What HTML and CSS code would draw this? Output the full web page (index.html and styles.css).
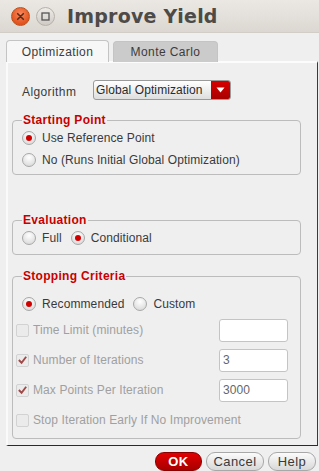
FILE: index.html
```html
<!DOCTYPE html>
<html>
<head>
<meta charset="utf-8">
<link rel="stylesheet" href="styles.css">
</head>
<body>
<div class="titlebar">
  <span class="wbtn close"><svg width="17" height="17" viewBox="0 0 17 17"><path d="M5.7 5.7 L11.3 11.3 M11.3 5.7 L5.7 11.3" stroke="#5a2a1a" stroke-width="1.6" stroke-linecap="round"/></svg></span>
  <span class="wbtn max"><svg width="17" height="17" viewBox="0 0 17 17"><rect x="5" y="5" width="7" height="7" fill="none" stroke="#555" stroke-width="1.3"/></svg></span>
  <span class="title">Improve Yield</span>
</div>
<div class="tabs">
  <div class="tab active">Optimization</div>
  <div class="tab">Monte Carlo</div>
</div>
<div class="panel">
  <div class="algo">
    <span class="algo-label">Algorithm</span>
    <div class="combo"><span class="combo-text">Global Optimization</span><span class="combo-arrow"><svg width="9" height="6" viewBox="0 0 9 6"><path d="M0.5 0.5 L8.5 0.5 L4.5 5.5 Z" fill="#fff"/></svg></span></div>
  </div>
  <fieldset class="group g-start">
    <legend>Starting Point</legend>
    <div class="row"><span class="radio on"></span><span>Use Reference Point</span></div>
    <div class="row"><span class="radio"></span><span>No (Runs Initial Global Optimization)</span></div>
  </fieldset>
  <fieldset class="group g-eval">
    <legend>Evaluation</legend>
    <div class="row"><span class="radio"></span><span class="lbl-gap">Full</span><span class="radio on"></span><span>Conditional</span></div>
  </fieldset>
  <fieldset class="group g-stop">
    <legend>Stopping Criteria</legend>
    <div class="row r-rec"><span class="radio on"></span><span class="lbl-gap">Recommended</span><span class="radio"></span><span>Custom</span></div>
    <div class="crow"><span class="check"></span><span class="dis grow">Time Limit (minutes)</span><span class="field"></span></div>
    <div class="crow"><span class="check"><svg width="12" height="12" viewBox="0 0 12 12"><path d="M2 6 L5 9 L10 2.5" fill="none" stroke="#a04848" stroke-width="2"/></svg></span><span class="dis grow">Number of Iterations</span><span class="field">3</span></div>
    <div class="crow"><span class="check"><svg width="12" height="12" viewBox="0 0 12 12"><path d="M2 6 L5 9 L10 2.5" fill="none" stroke="#a04848" stroke-width="2"/></svg></span><span class="dis grow">Max Points Per Iteration</span><span class="field">3000</span></div>
    <div class="crow last"><span class="check"></span><span class="dis grow">Stop Iteration Early If No Improvement</span></div>
  </fieldset>
</div>
<div class="buttons">
  <span class="btn ok">OK</span>
  <span class="btn">Cancel</span>
  <span class="btn help">Help</span>
</div>
</body>
</html>
```

FILE: styles.css
```css
html, body {
  margin: 0;
  padding: 0;
}
body {
  width: 319px;
  height: 471px;
  background: #efefef;
  font-family: "Liberation Sans", Arial, sans-serif;
  font-size: 12px;
  letter-spacing: 0.1px;
  color: #3a3a3a;
  overflow: hidden;
}
.titlebar {
  height: 32px;
  display: flex;
  align-items: center;
  background: linear-gradient(#ebe8e4, #dcd7d1);
  border-bottom: 1px solid #d2cdc7;
}
.wbtn {
  border-radius: 50%;
  display: flex;
  align-items: center;
  justify-content: center;
}
.close {
  margin-left: 11px;
  background: radial-gradient(circle at 50% 35%, #f88a5e, #e2531e 70%);
  border: 1px solid #b8521f;
  width: 17px;
  height: 17px;
}
.max {
  margin-left: 6px;
  background: linear-gradient(#eeebe8, #cfcac4);
  border: 1px solid #b7b1aa;
  width: 17px;
  height: 17px;
}
.title {
  margin-left: 12px;
  font-family: "DejaVu Sans", sans-serif;
  font-weight: bold;
  font-size: 19px;
  letter-spacing: 0.2px;
  color: #4d4a47;
}
.tabs {
  display: flex;
  margin-top: 7px;
  padding-left: 6px;
  gap: 4px;
  height: 21px;
}
.tab {
  height: 20px;
  border: 1px solid #c4c4c4;
  border-bottom: none;
  border-radius: 4px 4px 0 0;
  background: #cbcbcb;
  color: #3c3c3c;
  display: flex;
  align-items: center;
  justify-content: center;
  width: 103px;
  margin-top: 1px;
  letter-spacing: 0.4px;
}
.tab.active {
  background: #f7f7f7;
  width: 101px;
  height: 21px;
  margin-top: 0;
}
.panel {
  margin-left: 6px;
  width: 309px;
  height: 382px;
  border-top: 2px solid #fcfcfc;
  border-left: 2px solid #fafafa;
  border-right: 1px solid #3a3a3a;
  border-bottom: 1px solid #2a2a2a;
  box-sizing: content-box;
  display: flex;
  flex-direction: column;
}
.algo {
  display: flex;
  align-items: center;
  margin-top: 17px;
  height: 20px;
}
.algo-label {
  margin-left: 14px;
  width: 71px;
  margin-top: 4px;
  letter-spacing: 0.4px;
}
.combo {
  width: 136px;
  height: 18px;
  border: 1px solid #9a9a9a;
  border-radius: 3px;
  background: linear-gradient(#ffffff, #dedede);
  display: flex;
  align-items: center;
  overflow: hidden;
}
.combo-text {
  flex: 1;
  padding-left: 2px;
  color: #2a2a2a;
  white-space: nowrap;
}
.combo-arrow {
  width: 19px;
  height: 18px;
  background: linear-gradient(#d80000, #a80000);
  display: flex;
  align-items: center;
  justify-content: center;
}
.group {
  margin: 0 0 0 4px;
  width: 289px;
  box-sizing: border-box;
  border: 1px solid #bcbcbc;
  border-radius: 4px;
  padding: 0 0 0 9px;
}
legend {
  color: #c80000;
  font-weight: bold;
  font-size: 12px;
  letter-spacing: 0.3px;
  padding: 0 1px;
  margin-left: 0;
  line-height: 14px;
}
.g-start {
  margin-top: 13px;
  height: 62px;
}
.g-eval {
  margin-top: 38px;
  height: 42px;
}
.g-stop {
  margin-top: 14px;
  height: 170px;
}
.row {
  display: flex;
  align-items: center;
  height: 22px;
}
.r-rec { margin-top: 10px; margin-bottom: 0; }
.radio {
  width: 12px;
  height: 12px;
  border-radius: 50%;
  border: 1px solid #a8a8a8;
  background: radial-gradient(circle at 50% 30%, #ffffff, #dcdcdc 80%);
  margin-right: 6px;
  position: relative;
  flex: none;
}
.radio.on::after {
  content: "";
  position: absolute;
  left: 3px;
  top: 3px;
  width: 6px;
  height: 6px;
  border-radius: 50%;
  background: #d00000;
}
.lbl-gap { margin-right: 9px; }
.crow {
  display: flex;
  align-items: center;
  height: 30px;
  margin-left: -6px;
  padding-right: 12px;
}
.check {
  width: 11px;
  height: 11px;
  border: 1px solid #d2d2d2;
  background: #ebebeb;
  border-radius: 2px;
  margin-right: 4px;
  display: flex;
  align-items: center;
  justify-content: center;
  flex: none;
}
.dis { color: #a0a0a0; }
.grow { flex: 1; }
.field {
  width: 64px;
  height: 21px;
  border: 1px solid #c4c4c4;
  border-radius: 3px;
  background: #fff;
  color: #666;
  display: flex;
  align-items: center;
  padding-left: 3px;
  flex: none;
}
.buttons {
  display: flex;
  justify-content: flex-end;
  gap: 4px;
  margin-top: 6px;
  padding-right: 3px;
}
.btn {
  height: 17px;
  border-radius: 9px;
  border: 1px solid #a8a8a8;
  background: linear-gradient(#fbfbfb, #d8d8d8);
  color: #3a3a3a;
  display: flex;
  align-items: center;
  justify-content: center;
  width: 56px;
  font-size: 13px;
  letter-spacing: 0.4px;
}
.btn.ok {
  width: 45px;
  background: linear-gradient(#e20000, #a80000);
  border-color: #8a0000;
  color: #fff;
  font-weight: bold;
}
.btn.help { width: 46px; }
```
